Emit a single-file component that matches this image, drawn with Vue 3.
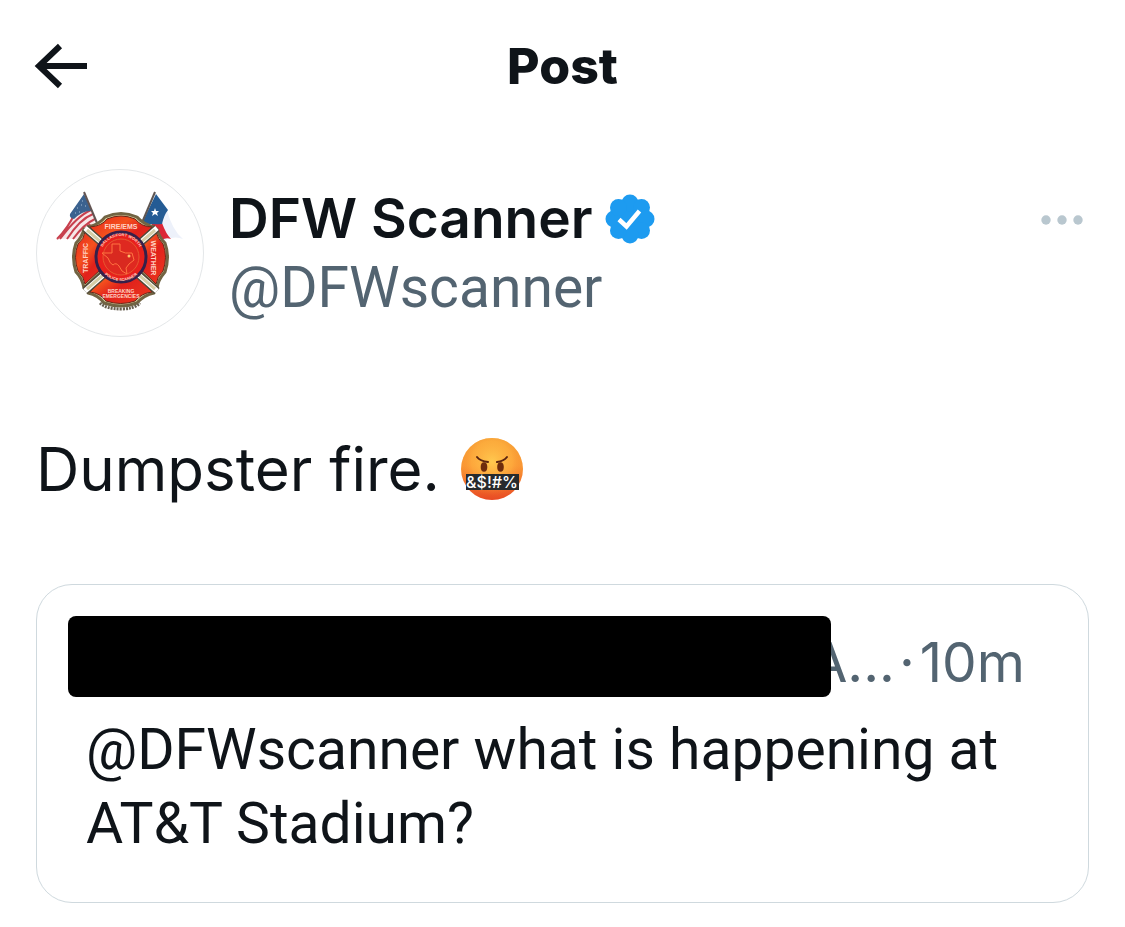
<script setup>
import { ref } from 'vue'

// Author of the main post
const author = ref({
  name: 'DFW Scanner',
  handle: '@DFWscanner',
})

const postText = ref('Dumpster fire.')

// Post that is being quoted, its author is blacked out
const quoted = ref({
  handleEnd: 'A...',
  time: '10m',
  text: '@DFWscanner what is happening at AT&T Stadium?',
})
</script>

<template>
  <div class="page">
    <header class="topbar">
      <button class="icon-button" type="button" aria-label="Back">
        <svg width="54" height="48" viewBox="0 0 54 48">
          <path d="M26 4 L5 24 L26 44 M5 24 H53" fill="none" stroke="#0f1419" stroke-width="6" />
        </svg>
      </button>
      <h1>Post</h1>
    </header>

    <main>
      <section class="author">
        <div class="avatar">
          <svg viewBox="0 3 180 180" width="180" height="180">
            <defs>
              <linearGradient id="shieldRed" x1="0" y1="0" x2="1" y2="1">
                <stop offset="0" stop-color="#e8251b" />
                <stop offset="0.35" stop-color="#f4511e" />
                <stop offset="0.55" stop-color="#e0211b" />
                <stop offset="1" stop-color="#ee3a20" />
              </linearGradient>
              <path id="ringTop" d="M70 97 A21 21 0 0 1 112 97" />
              <path id="ringBottom" d="M67 97 A24 24 0 0 0 115 97" />
            </defs>

            <!-- US flag -->
            <path d="M54 34 L66 60 L50 80 Q36 77 26 80 Q38 68 45 49 Z" fill="#f6e6e8" />
            <path d="M61 50 Q47 56 30 79 M63 54 Q50 59 37 79 M65 59 Q54 64 43 79 M60 64 L49 80 M45 53 Q38 68 27 79" fill="none" stroke="#c8404e" stroke-width="2" />
            <path d="M54 34 L62 51 Q53 50 44 59 Q39 58 40 54 Z" fill="#3b628f" />
            <path d="M47 48 h1 M51 45 h1 M52 41 h1 M55 46 h1 M49 52 h1 M45 53 h1" stroke="#a9c0d8" stroke-width="1" />
            <path d="M54 32 L67 63" stroke="#625452" stroke-width="2" />

            <!-- Texas flag -->
            <path d="M126 34 L137 50 Q142 70 153 79 Q144 75 134 81 L120 69 Z" fill="#edf1fa" />
            <path d="M122 64 L132 63 Q136 74 141 79 Q135 77 130 81 L120 74 Z" fill="#dc2636" />
            <path d="M126 34 L138 50 Q134 55 132 64 Q122 65 112 63 Z" fill="#245b94" />
            <path d="M125 48 l1 3 h3 l-2 2 1 3 -3-2 -3 2 1-3 -2-2 h3z" fill="#fff" />
            <path d="M125 32 L111 65" stroke="#5d5552" stroke-width="2" />

            <!-- shield -->
            <g fill="#d5cd9c" stroke="#716443" stroke-width="3" stroke-linejoin="round">
              <path d="M58 67 Q70 64 75 57 Q91 50 107 57 Q113 64 124 67 L91 103 Z" />
              <path d="M54 69 Q52 77 46 83 Q41 97 46 112 Q52 118 54 128 L88 96 Z" />
              <path d="M127 69 Q129 77 135 83 Q140 97 135 112 Q128 120 127 128 L94 96 Z" />
              <path d="M58 133 Q68 135 74 143 Q91 149 107 143 Q114 135 124 133 L91 98 Z" />
            </g>
            <g fill="url(#shieldRed)" stroke="#6b2618">
              <path d="M60 67 Q72 66 77 59 Q91 53 105 59 Q112 67 122 67 L91 99 Z" />
              <path d="M55 72 Q54 79 48 84 Q43 97 48 111 Q54 117 55 124 L84 97 Z" />
              <path d="M126 72 Q128 79 133 84 Q138 97 133 111 Q127 117 126 124 L98 97 Z" />
              <path d="M60 132 Q70 133 76 141 Q91 146 105 141 Q112 133 122 132 L91 100 Z" />
            </g>
            <path d="M55 68 L127 131 M127 68 L55 131" stroke="#534b39" stroke-width="8" />
            <path d="M55 68 L127 131 M127 68 L55 131" stroke="#fff" stroke-width="5" />
            <path d="M57 70 L125 129 M125 70 L57 129" stroke="#d5cda6" stroke-width="3" />
            <circle cx="91" cy="97" r="25" fill="#e8201c" stroke="#35204a" stroke-width="3" />
            <circle cx="91" cy="97" r="18" fill="#df2920" stroke="#e65931" stroke-width="1" />
            <path d="M82 84 h8 v7 q5 3 12 2 l2 7 q-6 4-8 8 l1 6 q-6-2-8-8 q-3-4-6-1 q-3-1-5-7 l-6-5 h10z" fill="#d92920" stroke="#ff7441" stroke-width="1" />
            <circle cx="99" cy="96" r="1.5" fill="#ffc26d" />
            <g class="badge-text">
              <text x="91" y="69" text-anchor="middle" font-size="7">FIRE/EMS</text>
              <text x="0" y="0" text-anchor="middle" font-size="7" transform="translate(58 98) rotate(-90)">TRAFFIC</text>
              <text x="0" y="0" text-anchor="middle" font-size="7" transform="translate(121 98) rotate(90)">WEATHER</text>
              <text x="91" y="133" text-anchor="middle" font-size="5">BREAKING</text>
              <text x="91" y="138" text-anchor="middle" font-size="5">EMERGENCIES</text>
              <text font-size="4"><textPath href="#ringTop" startOffset="50%" text-anchor="middle">DALLAS/FORT WORTH</textPath></text>
              <text font-size="4"><textPath href="#ringBottom" startOffset="50%" text-anchor="middle">POLICE SCANNER</textPath></text>
            </g>
            <path d="M70 143 Q76 149 91 149 Q104 149 110 143" fill="none" stroke="#675f50" stroke-width="3" stroke-dasharray="2 1" />
          </svg>
        </div>

        <div class="names">
          <div class="name-line">
            <h2>{{ author.name }}</h2>
            <svg class="verified" viewBox="0 0 50 50" width="50" height="50" role="img" aria-label="Verified">
              <g fill="#1d9bf0">
                <circle cx="25" cy="25" r="19" />
                <circle cx="25" cy="9" r="8.5" />
                <circle cx="36.5" cy="13.5" r="8.5" />
                <circle cx="41" cy="25" r="8.5" />
                <circle cx="36.5" cy="36.5" r="8.5" />
                <circle cx="25" cy="41" r="8.5" />
                <circle cx="13.5" cy="36.5" r="8.5" />
                <circle cx="9" cy="25" r="8.5" />
                <circle cx="13.5" cy="13.5" r="8.5" />
              </g>
              <path d="M14 25.5 L21.5 32.5 L34.5 17" fill="none" stroke="#fff" stroke-width="4.5" />
            </svg>
          </div>
          <p class="handle">{{ author.handle }}</p>
        </div>

        <button class="icon-button more" type="button" aria-label="More">
          <svg width="42" height="10" viewBox="0 0 42 10" fill="#b9c7cf">
            <circle cx="5" cy="5" r="4.7" />
            <circle cx="21" cy="5" r="4.7" />
            <circle cx="37" cy="5" r="4.7" />
          </svg>
        </button>
      </section>

      <p class="post-text">
        <span>{{ postText }}</span>
        <svg viewBox="0 0 64 64" width="64" height="64" role="img" aria-label="Cursing face">
          <defs>
            <linearGradient id="face" x1="0" y1="0" x2="0" y2="1">
              <stop offset="0" stop-color="#f6a536" />
              <stop offset="0.45" stop-color="#fb9a35" />
              <stop offset="1" stop-color="#e84a24" />
            </linearGradient>
            <radialGradient id="glow" cx="0.5" cy="0.38" r="0.55">
              <stop offset="0" stop-color="#ffc94f" />
              <stop offset="0.6" stop-color="#ffb040" stop-opacity="0.6" />
              <stop offset="1" stop-color="#f07a2a" stop-opacity="0" />
            </radialGradient>
          </defs>
          <circle cx="32" cy="32" r="31" fill="url(#face)" />
          <circle cx="32" cy="32" r="31" fill="url(#glow)" />
          <ellipse cx="24" cy="30" rx="3.3" ry="4.8" fill="#6e2b0c" />
          <ellipse cx="40.5" cy="30" rx="3.3" ry="4.8" fill="#6e2b0c" />
          <path d="M17 20 Q20 24 28 25 M47 20 Q44 24 37 25" fill="none" stroke="#5b2410" stroke-width="2" stroke-linecap="round" />
          <rect x="6" y="37" width="53" height="16" fill="#272a2d" />
          <text x="32" y="51" text-anchor="middle" class="curse">&amp;$!#%</text>
        </svg>
      </p>

      <article class="quote">
        <div class="quote-head">
          <span class="redacted"></span>
          <span class="handle-end">{{ quoted.handleEnd }}</span>
          <span class="dot">·</span>
          <time>{{ quoted.time }}</time>
        </div>
        <p class="quote-text">{{ quoted.text }}</p>
      </article>
    </main>
  </div>
</template>

<style>
body {
  margin: 0;
  background: #fff;
}
</style>

<style scoped>
.page {
  padding: 0 36px 24px;
  font-family: Inter, Roboto, "Liberation Sans", sans-serif;
  color: #0f1419;
}

h1,
h2,
p {
  margin: 0;
}

.icon-button {
  display: flex;
  padding: 0;
  border: 0;
  background: none;
  cursor: pointer;
}

.topbar {
  display: grid;
  grid-template-columns: 1fr auto 1fr;
  align-items: center;
  height: 132px;
}

.topbar .icon-button {
  justify-self: start;
  margin-left: -2px;
}

h1 {
  font-size: 50px;
  line-height: 60px;
  font-weight: 800;
}

.author {
  display: flex;
  align-items: flex-start;
  gap: 25px;
  margin-top: 37px;
}

.avatar {
  flex: none;
  display: flex;
  align-items: center;
  justify-content: center;
  box-sizing: border-box;
  width: 168px;
  height: 168px;
  border: 1px solid #e4e7e9;
  border-radius: 50%;
  overflow: hidden;
}

.avatar svg {
  flex: none;
}

.badge-text {
  fill: #ffd3c4;
  font-family: "Liberation Sans", sans-serif;
  font-weight: bold;
}

.names {
  flex: 1;
  padding-top: 15px;
}

.name-line {
  display: flex;
  align-items: center;
  gap: 12px;
}

h2 {
  font-size: 55px;
  line-height: 69px;
  font-weight: 600;
}

.handle,
.quote-text {
  font-family: Roboto, "Liberation Sans", sans-serif;
  font-size: 57px;
}

.handle {
  line-height: 69px;
  color: #536471;
}

.more {
  margin: 46px 6px 0 0;
}

.post-text {
  display: flex;
  align-items: center;
  gap: 20px;
  margin-top: 92px;
  font-size: 60px;
  line-height: 80px;
}

.curse {
  font-size: 16px;
  font-weight: 500;
  fill: #fff;
}

.quote {
  margin-top: 75px;
  padding: 31px 63px 41px 49px;
  border: 1px solid #cfd9de;
  border-radius: 36px;
}

.quote-head {
  display: flex;
  align-items: flex-end;
  font-size: 55px;
  line-height: 69px;
  color: #536471;
}

.redacted {
  position: relative;
  z-index: 1;
  flex: 1;
  height: 81px;
  margin: 0 -22px 0 -18px;
  border-radius: 8px;
  background: #000;
}

.dot {
  margin: 0 5px 0 4px;
}

.quote-text {
  margin-top: 16px;
  line-height: 74px;
}
</style>
